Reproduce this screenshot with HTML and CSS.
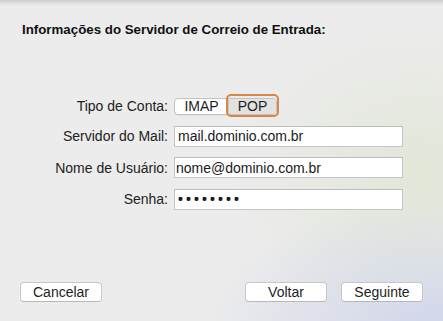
FILE: index.html
```html
<!DOCTYPE html>
<html lang="pt-BR">
<head>
<meta charset="utf-8">
<title>Informações do Servidor de Correio de Entrada</title>
<link rel="stylesheet" href="styles.css">
</head>
<body>
<div class="window">
  <h1 class="title">Informações do Servidor de Correio de Entrada:</h1>
  <div class="form">
    <div class="row row-seg">
      <span class="label">Tipo de Conta:</span>
      <div class="segmented">
        <span class="seg seg-first">IMAP</span>
        <span class="seg seg-selected">POP</span>
      </div>
    </div>
    <div class="row">
      <span class="label">Servidor do Mail:</span>
      <input class="field" type="text" value="mail.dominio.com.br">
    </div>
    <div class="row">
      <span class="label">Nome de Usuário:</span>
      <input class="field field-tight" type="text" value="nome@dominio.com.br">
    </div>
    <div class="row">
      <span class="label">Senha:</span>
      <input class="field field-pw" type="text" value="••••••••">
    </div>
  </div>
  <div class="footer">
    <button class="btn">Cancelar</button>
    <div class="spacer"></div>
    <button class="btn">Voltar</button>
    <button class="btn">Seguinte</button>
  </div>
</div>
</body>
</html>
```
FILE: styles.css
```css
html, body {
  margin: 0;
  padding: 0;
}
body {
  width: 443px;
  height: 321px;
  overflow: hidden;
  font-family: "Liberation Sans", Arial, sans-serif;
  font-size: 14px;
  color: #1e1e1e;
  background:
    linear-gradient(to bottom, rgba(0,0,0,0.14) 0, rgba(0,0,0,0.05) 3px, rgba(0,0,0,0) 6px),
    radial-gradient(ellipse 230px 130px at 430px 330px, rgba(204,210,234,0.85), rgba(204,210,234,0) 100%),
    radial-gradient(ellipse 190px 150px at 420px 175px, rgba(222,229,208,0.75), rgba(222,229,208,0) 100%),
    #ececec;
}
.window {
  height: 321px;
  display: flex;
  flex-direction: column;
}
.title {
  margin: 0;
  padding: 22px 0 0 22px;
  font-size: 13.3px;
  font-weight: bold;
  line-height: 15px;
  color: #111;
}
.form {
  margin-top: 60px;
  display: flex;
  flex-direction: column;
  gap: 10.5px;
}
.row {
  display: grid;
  grid-template-columns: 168px 229px;
  column-gap: 6px;
  align-items: center;
  height: 21px;
}
.row-seg {
  height: 18px;
}
.label {
  text-align: right;
  color: #222;
  line-height: 16px;
}
.segmented {
  display: flex;
  height: 17px;
  width: 103px;
  box-sizing: border-box;
  border: 1px solid #c3c3c3;
  border-radius: 4px;
  background: #fff;
  box-shadow: 0 1px 0 rgba(0,0,0,0.04);
}
.seg {
  display: flex;
  align-items: center;
  justify-content: center;
  line-height: 15px;
  color: #1e1e1e;
}
.seg-first {
  width: 53px;
  border-right: 1px solid #c8c8c8;
}
.seg-selected {
  position: relative;
  flex: 1;
  background: #e2e2e2;
  border-radius: 0 3px 3px 0;
}
.seg-selected::after {
  content: "";
  position: absolute;
  left: -3px;
  right: -3px;
  top: -5px;
  bottom: -3px;
  border: 2.5px solid #d6884c;
  border-radius: 5px;
}
.field {
  box-sizing: border-box;
  width: 229px;
  height: 21px;
  margin: 0;
  padding: 0 0 0 3px;
  border: 1px solid #c6c6c6;
  border-top-color: #bdbdbd;
  border-radius: 0;
  background: #fff;
  font-family: "Liberation Sans", Arial, sans-serif;
  font-size: 14px;
  color: #1a1a1a;
  outline: none;
}
.field-tight {
  padding-left: 1px;
}
.field-pw {
  font-size: 14px;
  letter-spacing: 3.1px;
  font-weight: bold;
  padding-left: 3px;
}
.footer {
  margin-top: auto;
  margin-bottom: 19px;
  display: flex;
  align-items: center;
  padding: 0 20px;
  gap: 14px;
}
.spacer {
  flex: 1;
}
.btn {
  box-sizing: border-box;
  width: 82px;
  height: 20px;
  margin: 0;
  padding: 0;
  border: 1px solid #c8c8c8;
  border-bottom-color: #b8b8b8;
  border-radius: 4px;
  background: #fff;
  font-family: "Liberation Sans", Arial, sans-serif;
  font-size: 14px;
  color: #1e1e1e;
  line-height: 16px;
}
```
